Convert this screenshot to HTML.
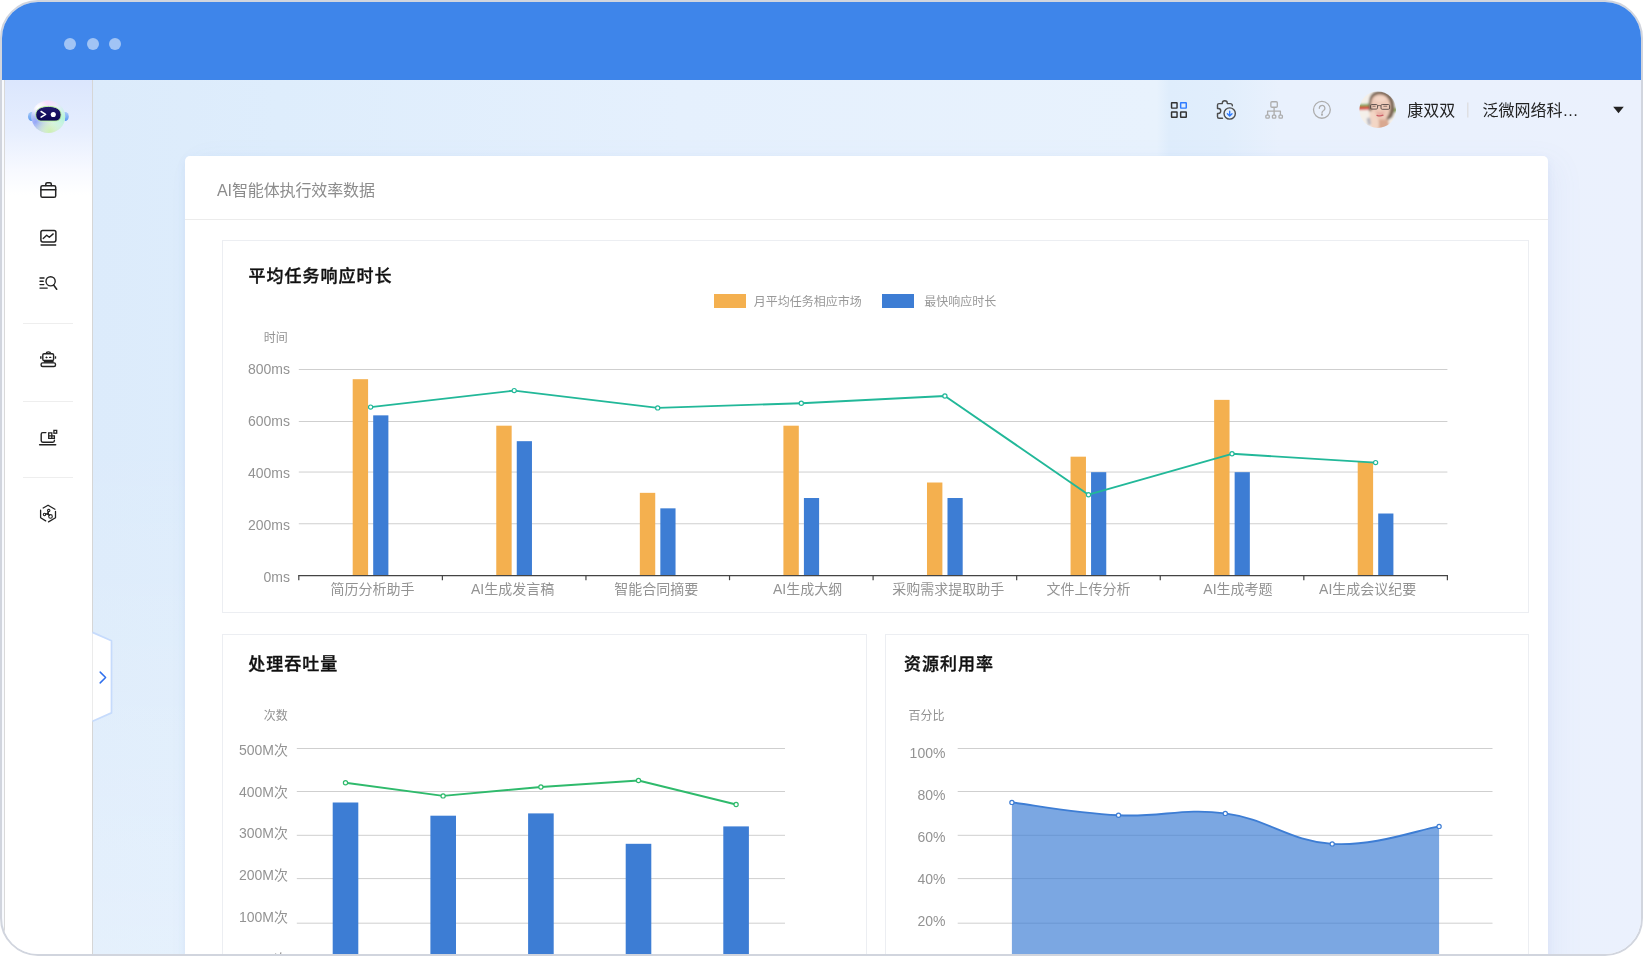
<!DOCTYPE html>
<html lang="zh-CN">
<head>
<meta charset="utf-8">
<title>AI智能体执行效率数据</title>
<style>
html,body{margin:0;padding:0;background:#fff;}
body{width:1644px;height:956px;overflow:hidden;position:relative;font-family:"Liberation Sans", "Noto Sans CJK SC", sans-serif;}
.abs{position:absolute;}
.t{position:absolute;line-height:24px;height:24px;white-space:nowrap;}
#frame{position:absolute;left:0;top:0;width:1639px;height:952px;border:2px solid #d1d5de;border-radius:38px;overflow:hidden;background:#f8fafe;}
#inner{position:absolute;left:-2px;top:-2px;width:1644px;height:956px;}
#topbar{position:absolute;left:0;top:0;width:1644px;height:80px;background:#3e85ea;}
.dot{position:absolute;top:38px;width:12px;height:12px;border-radius:50%;background:#a1c4f5;}
#side{position:absolute;left:4px;top:80px;width:87px;height:876px;border-left:1px solid #d9d9d9;border-right:1px solid #d6d6d6;box-sizing:content-box;
  background:linear-gradient(180deg,#dbe6fd 0px,#e6eefe 50px,#f7f9ff 90px,#ffffff 115px);}
.sdiv{position:absolute;left:23px;width:50px;height:1px;background:#eeeeee;}
#main{position:absolute;left:92px;top:80px;width:1552px;height:876px;
  background:linear-gradient(90deg,#dcebfb 0%,#deedfc 12%,#e5f0fd 38%,#e8f2fd 68.6%,#dfedfc 69.4%,#e1eefc 73%,#e9f1fd 76.5%,#ebf1fd 100%);}
#card{position:absolute;left:184.5px;top:155.5px;width:1363.5px;height:820px;background:#fff;border-radius:5px;box-shadow:10px 6px 30px rgba(100,125,210,0.06),0 3px 9px rgba(90,130,200,0.08);}
#cardline{position:absolute;left:184.5px;top:219px;width:1363.5px;height:1px;background:#ececec;}
#txt{position:absolute;left:0;top:0;width:1644px;height:956px;will-change:transform;}
.panel{position:absolute;border:1px solid #eceef2;box-sizing:border-box;background:#fff;}
</style>
</head>
<body>
<div id="frame"><div id="inner">
<div id="topbar"></div>
<div class="dot" style="left:64px"></div><div class="dot" style="left:86.5px"></div><div class="dot" style="left:109px"></div>
<div id="main"></div>
<div class="abs" style="left:92px;top:80px;width:140px;height:876px;background:linear-gradient(180deg,rgba(255,255,255,0) 0%,rgba(255,255,255,0) 40%,rgba(255,255,255,0.25) 100%)"></div>
<div id="side"></div>
<div class="sdiv" style="top:323px"></div><div class="sdiv" style="top:401px"></div><div class="sdiv" style="top:477px"></div>
<div id="card"></div>
<div id="cardline"></div>
<div class="panel" style="left:222px;top:239.5px;width:1307px;height:373px"></div>
<div class="panel" style="left:222px;top:634px;width:645px;height:340px"></div>
<div class="panel" style="left:884.5px;top:634px;width:644.5px;height:340px"></div>
<svg class="abs" style="left:0;top:0" width="1644" height="956" viewBox="0 0 1644 956"><line x1="298.8" y1="523.75" x2="1447.4" y2="523.75" stroke="#cfcfcf" stroke-width="1"/><line x1="298.8" y1="472.05" x2="1447.4" y2="472.05" stroke="#cfcfcf" stroke-width="1"/><line x1="298.8" y1="421.50" x2="1447.4" y2="421.50" stroke="#cfcfcf" stroke-width="1"/><line x1="298.8" y1="369.50" x2="1447.4" y2="369.50" stroke="#cfcfcf" stroke-width="1"/><rect x="352.69" y="379.19" width="15.4" height="196.31" fill="#f4b04f"/><rect x="373.19" y="415.35" width="15.2" height="160.15" fill="#3d7dd4"/><rect x="496.26" y="425.69" width="15.4" height="149.81" fill="#f4b04f"/><rect x="516.76" y="441.18" width="15.2" height="134.32" fill="#3d7dd4"/><rect x="639.84" y="492.84" width="15.4" height="82.66" fill="#f4b04f"/><rect x="660.34" y="508.34" width="15.2" height="67.16" fill="#3d7dd4"/><rect x="783.41" y="425.69" width="15.4" height="149.81" fill="#f4b04f"/><rect x="803.91" y="498.01" width="15.2" height="77.49" fill="#3d7dd4"/><rect x="926.99" y="482.51" width="15.4" height="92.99" fill="#f4b04f"/><rect x="947.49" y="498.01" width="15.2" height="77.49" fill="#3d7dd4"/><rect x="1070.56" y="456.68" width="15.4" height="118.82" fill="#f4b04f"/><rect x="1091.06" y="472.18" width="15.2" height="103.32" fill="#3d7dd4"/><rect x="1214.14" y="399.86" width="15.4" height="175.64" fill="#f4b04f"/><rect x="1234.64" y="472.18" width="15.2" height="103.32" fill="#3d7dd4"/><rect x="1357.71" y="461.85" width="15.4" height="113.65" fill="#f4b04f"/><rect x="1378.21" y="513.51" width="15.2" height="61.99" fill="#3d7dd4"/><polyline fill="none" stroke="#22b899" stroke-width="1.9" stroke-linejoin="round" points="370.6,407.1 514.2,390.6 657.7,407.9 801.3,403.2 944.9,396.0 1088.5,494.7 1232.0,453.8 1375.6,462.6"/><circle cx="370.6" cy="407.1" r="2.1" fill="#fff" stroke="#22b899" stroke-width="1.2"/><circle cx="514.2" cy="390.6" r="2.1" fill="#fff" stroke="#22b899" stroke-width="1.2"/><circle cx="657.7" cy="407.9" r="2.1" fill="#fff" stroke="#22b899" stroke-width="1.2"/><circle cx="801.3" cy="403.2" r="2.1" fill="#fff" stroke="#22b899" stroke-width="1.2"/><circle cx="944.9" cy="396.0" r="2.1" fill="#fff" stroke="#22b899" stroke-width="1.2"/><circle cx="1088.5" cy="494.7" r="2.1" fill="#fff" stroke="#22b899" stroke-width="1.2"/><circle cx="1232.0" cy="453.8" r="2.1" fill="#fff" stroke="#22b899" stroke-width="1.2"/><circle cx="1375.6" cy="462.6" r="2.1" fill="#fff" stroke="#22b899" stroke-width="1.2"/><line x1="298.2" y1="575.6" x2="1448.0" y2="575.6" stroke="#444" stroke-width="1.3"/><line x1="298.80" y1="575.6" x2="298.80" y2="580.2" stroke="#444" stroke-width="1.2"/><line x1="442.38" y1="575.6" x2="442.38" y2="580.2" stroke="#444" stroke-width="1.2"/><line x1="585.95" y1="575.6" x2="585.95" y2="580.2" stroke="#444" stroke-width="1.2"/><line x1="729.53" y1="575.6" x2="729.53" y2="580.2" stroke="#444" stroke-width="1.2"/><line x1="873.10" y1="575.6" x2="873.10" y2="580.2" stroke="#444" stroke-width="1.2"/><line x1="1016.68" y1="575.6" x2="1016.68" y2="580.2" stroke="#444" stroke-width="1.2"/><line x1="1160.25" y1="575.6" x2="1160.25" y2="580.2" stroke="#444" stroke-width="1.2"/><line x1="1303.83" y1="575.6" x2="1303.83" y2="580.2" stroke="#444" stroke-width="1.2"/><line x1="1447.40" y1="575.6" x2="1447.40" y2="580.2" stroke="#444" stroke-width="1.2"/><line x1="296.8" y1="748.5" x2="785" y2="748.5" stroke="#cfcfcf" stroke-width="1"/><line x1="296.8" y1="791.5" x2="785" y2="791.5" stroke="#cfcfcf" stroke-width="1"/><line x1="296.8" y1="835.3" x2="785" y2="835.3" stroke="#cfcfcf" stroke-width="1"/><line x1="296.8" y1="878.6" x2="785" y2="878.6" stroke="#cfcfcf" stroke-width="1"/><line x1="296.8" y1="923.2" x2="785" y2="923.2" stroke="#cfcfcf" stroke-width="1"/><rect x="332.7" y="802.5" width="25.6" height="157.5" fill="#3d7dd4"/><rect x="430.4" y="815.7" width="25.6" height="144.3" fill="#3d7dd4"/><rect x="528.1" y="813.4" width="25.6" height="146.6" fill="#3d7dd4"/><rect x="625.7" y="843.8" width="25.6" height="116.2" fill="#3d7dd4"/><rect x="723.3" y="826.4" width="25.6" height="133.6" fill="#3d7dd4"/><polyline fill="none" stroke="#2fba6c" stroke-width="1.9" stroke-linejoin="round" points="345.5,782.7 443.1,795.9 540.9,787.0 638.5,780.5 736.1,804.5"/><circle cx="345.5" cy="782.7" r="2.1" fill="#fff" stroke="#2fba6c" stroke-width="1.2"/><circle cx="443.1" cy="795.9" r="2.1" fill="#fff" stroke="#2fba6c" stroke-width="1.2"/><circle cx="540.9" cy="787.0" r="2.1" fill="#fff" stroke="#2fba6c" stroke-width="1.2"/><circle cx="638.5" cy="780.5" r="2.1" fill="#fff" stroke="#2fba6c" stroke-width="1.2"/><circle cx="736.1" cy="804.5" r="2.1" fill="#fff" stroke="#2fba6c" stroke-width="1.2"/><line x1="957.7" y1="748.5" x2="1492.5" y2="748.5" stroke="#cfcfcf" stroke-width="1"/><line x1="957.7" y1="791.5" x2="1492.5" y2="791.5" stroke="#cfcfcf" stroke-width="1"/><line x1="957.7" y1="835.3" x2="1492.5" y2="835.3" stroke="#cfcfcf" stroke-width="1"/><line x1="957.7" y1="878.6" x2="1492.5" y2="878.6" stroke="#cfcfcf" stroke-width="1"/><line x1="957.7" y1="923.2" x2="1492.5" y2="923.2" stroke="#cfcfcf" stroke-width="1"/><path d="M1011.9,802.4 C1033.2,805.0 1075.8,813.1 1118.5,815.3 C1161.2,817.5 1182.6,807.7 1225.3,813.4 C1268.0,819.1 1289.4,841.3 1332.2,843.9 C1375.0,846.5 1417.7,829.9 1439.1,826.4 L1439.1,960 L1011.9,960 Z" fill="#3d7dd4" fill-opacity="0.68"/><path d="M1011.9,802.4 C1033.2,805.0 1075.8,813.1 1118.5,815.3 C1161.2,817.5 1182.6,807.7 1225.3,813.4 C1268.0,819.1 1289.4,841.3 1332.2,843.9 C1375.0,846.5 1417.7,829.9 1439.1,826.4" fill="none" stroke="#3d7dd4" stroke-width="1.9"/><circle cx="1011.9" cy="802.4" r="2.1" fill="#fff" stroke="#3d7dd4" stroke-width="1.2"/><circle cx="1118.5" cy="815.3" r="2.1" fill="#fff" stroke="#3d7dd4" stroke-width="1.2"/><circle cx="1225.3" cy="813.4" r="2.1" fill="#fff" stroke="#3d7dd4" stroke-width="1.2"/><circle cx="1332.2" cy="843.9" r="2.1" fill="#fff" stroke="#3d7dd4" stroke-width="1.2"/><circle cx="1439.1" cy="826.4" r="2.1" fill="#fff" stroke="#3d7dd4" stroke-width="1.2"/></svg>
<svg class="abs" style="left:0;top:0" width="1644" height="956" viewBox="0 0 1644 956" fill="none">
<defs>
  <radialGradient id="rb0" cx="0.5" cy="0.5" r="0.5"><stop offset="0" stop-color="#f4f5ff"/><stop offset="0.8" stop-color="#eef0ff"/><stop offset="1" stop-color="#e3e8fc"/></radialGradient>
  <radialGradient id="rb1" cx="0.47" cy="0.08" r="0.42"><stop offset="0" stop-color="#f6defb"/><stop offset="1" stop-color="#f6defb" stop-opacity="0"/></radialGradient>
  <radialGradient id="rb2" cx="0.13" cy="0.66" r="0.5"><stop offset="0" stop-color="#93a6f7"/><stop offset="1" stop-color="#9fb0f8" stop-opacity="0"/></radialGradient>
  <radialGradient id="rb3" cx="0.55" cy="0.95" r="0.52"><stop offset="0" stop-color="#cdf0b4"/><stop offset="1" stop-color="#d2f2bf" stop-opacity="0"/></radialGradient>
  <radialGradient id="rb4" cx="0.95" cy="0.55" r="0.48"><stop offset="0" stop-color="#b4f5d6"/><stop offset="1" stop-color="#bff7dc" stop-opacity="0"/></radialGradient>
  <radialGradient id="rb5" cx="0.2" cy="0.22" r="0.3"><stop offset="0" stop-color="#ffffff"/><stop offset="1" stop-color="#ffffff" stop-opacity="0"/></radialGradient>
  <linearGradient id="ear" x1="0" y1="0" x2="0" y2="1"><stop offset="0" stop-color="#a9cbfa"/><stop offset="1" stop-color="#5b9bef"/></linearGradient>
  <linearGradient id="visor" x1="0" y1="0" x2="0" y2="1"><stop offset="0" stop-color="#231a6e"/><stop offset="1" stop-color="#0b0552"/></linearGradient>
  <clipPath id="avc"><circle cx="1377.7" cy="109.7" r="18.3"/></clipPath>
  <filter id="bl2" x="-10%" y="-10%" width="120%" height="120%"><feGaussianBlur stdDeviation="0.85"/></filter>
  </defs>

<!-- robot logo -->
<g>
  <ellipse cx="31.6" cy="116.5" rx="3.6" ry="4.6" fill="url(#ear)"/>
  <ellipse cx="65.2" cy="116.5" rx="3.6" ry="4.6" fill="url(#ear)"/>
  <ellipse cx="48.3" cy="116.8" rx="16.9" ry="16.2" fill="url(#rb0)"/>
  <ellipse cx="48.3" cy="116.8" rx="16.9" ry="16.2" fill="url(#rb2)"/>
  <ellipse cx="48.3" cy="116.8" rx="16.9" ry="16.2" fill="url(#rb3)"/>
  <ellipse cx="48.3" cy="116.8" rx="16.9" ry="16.2" fill="url(#rb4)"/>
  <ellipse cx="48.3" cy="116.8" rx="16.9" ry="16.2" fill="url(#rb1)"/>
  <ellipse cx="48.3" cy="116.8" rx="16.9" ry="16.2" fill="url(#rb5)"/>
</g>
<path d="M48.4,106.4 C54.8,106.4 61.1,108.5 61.1,114.7 C61.1,118.7 58.6,121.1 55,121.1 H41.8 C38.2,121.1 35.7,118.7 35.7,114.7 C35.7,108.5 42,106.4 48.4,106.4 Z" fill="url(#visor)" stroke="#bdf5a6" stroke-width="1"/>
<path d="M41.1,111.5 L45.6,114.3 L41.1,117.1" stroke="#fff" stroke-width="1.5" stroke-linecap="round" stroke-linejoin="round"/>
<circle cx="53.3" cy="114.5" r="2.55" fill="#fff"/>

<!-- sidebar icons -->
<g stroke="#222" stroke-width="1.5" stroke-linecap="round" stroke-linejoin="round">
  <!-- briefcase -->
  <rect x="40.9" y="185.7" width="14.8" height="11.6" rx="1.6"/>
  <path d="M40.9,189.7 H55.7"/>
  <path d="M45.8,185.5 V184.1 Q45.8,182.7 47.2,182.7 H49.9 Q51.3,182.7 51.3,184.1 V185.5"/>
  <!-- chart monitor -->
  <rect x="40.9" y="230.4" width="15" height="11.5" rx="1.8"/>
  <path d="M40.6,245 H56.2" stroke-linecap="butt" stroke-width="1.7"/>
  <path d="M43.2,238.4 L46.7,235.2 L49.3,237.3 L53.2,233.9" stroke-width="1.4"/>
  <!-- list search -->
  <path d="M40,278 H44" stroke-width="1.4"/>
  <path d="M40,281.3 H43.2" stroke-width="1.4"/>
  <path d="M40,284.6 H43.8" stroke-width="1.4"/>
  <path d="M40,288.1 H47.2" stroke-width="1.4"/>
  <circle cx="50.6" cy="281.3" r="4.6" stroke-width="1.4"/>
  <path d="M53.6,285 L56.7,289.3" stroke-width="1.5"/>
  <!-- robot -->
  <rect x="42.8" y="353.8" width="10.8" height="6.7" rx="1.3" stroke-width="1.4"/>
  <path d="M46.4,353.4 Q46.4,351.9 48.4,351.9 Q50.4,351.9 50.6,353.4" stroke-width="1.4"/>
  <path d="M40.8,356.3 V358.7" stroke-width="1.5" stroke-linecap="butt"/>
  <path d="M55.5,356.3 V358.7" stroke-width="1.3" stroke-linecap="butt"/>
  <circle cx="46.4" cy="357.4" r="0.6" fill="#222" stroke-width="0.7"/>
  <path d="M49.6,357.4 H50.8" stroke-width="1.2"/>
  <path d="M43.8,361.8 H53.6" stroke-width="1.7" stroke-linecap="butt"/>
  <rect x="41.1" y="362.9" width="14.4" height="3.6" rx="1.5" stroke-width="1.4"/>
  <!-- laptop with blocks -->
  <path d="M45.9,432.6 H42.8 Q41.2,432.6 41.2,434.2 V440.6 Q41.2,442.2 42.8,442.2 H52.9 Q54.4,442.2 54.4,440.6 V440.2" stroke-width="1.4"/>
  <path d="M39.6,444.7 H55.7" stroke-width="1.4"/>
  <path d="M48.7,432.9 H51.8 V435.8 H54.4 V438.4 H48.7 Z M48.7,435.8 H51.8 V438.4" stroke-width="1.3" stroke-linejoin="miter"/>
  <rect x="53.9" y="430.4" width="2.8" height="2.8" stroke-width="1.3" stroke-linejoin="miter"/>
  <!-- hexagon share -->
  <path d="M43.2,508 L48.05,505.2 L54.9,509.2" stroke-width="1.3"/>
  <path d="M55.5,511.5 V517.8 L48.5,521.9" stroke-width="1.3"/>
  <path d="M40.6,510.2 V517.8 L45.7,520.9" stroke-width="1.3"/>
  <circle cx="48.7" cy="510.6" r="1.2" stroke-width="1.1"/>
  <circle cx="44.5" cy="514.5" r="1.2" stroke-width="1.1"/>
  <circle cx="50.5" cy="516.4" r="1.8" stroke-width="1.1"/>
  <path d="M48.4,511.8 L47.8,513.6 M45.6,514.1 L47.6,513.7 M47.9,513.9 L49.3,515.2" stroke-width="1.5"/><circle cx="47.8" cy="513.7" r="0.7" fill="#222" stroke-width="0.8"/>
</g>

<!-- collapse handle -->
<path d="M92.5,632.4 L111.5,640.7 V712.9 L92.5,721.2" fill="#fff" stroke="#c6dbfc" stroke-width="1.7" stroke-linejoin="round"/>
<path d="M100.2,672.1 L105.6,677.5 L100.2,682.9" stroke="#2f6fed" stroke-width="1.5" stroke-linecap="round" stroke-linejoin="round"/>

<!-- top grid icon -->
<g stroke-width="1.45" stroke="#333" stroke-linejoin="round">
  <rect x="1171.55" y="102.8" width="5.5" height="5.3" rx="0.3"/>
  <rect x="1180.65" y="102.8" width="5.6" height="5.3" rx="0.3" stroke="#2f7bff"/>
  <rect x="1171.55" y="111.9" width="5.5" height="5.3" rx="0.3"/>
  <rect x="1180.65" y="111.9" width="5.6" height="5.3" rx="0.3"/>
</g>
<!-- puzzle + download -->
<g stroke="#4d4d4d" stroke-width="1.4" stroke-linecap="round" stroke-linejoin="round">
  <path d="M1222.5,118.2 H1219 Q1217.5,118.2 1217.5,116.7 V113.45 H1218.3 A2.45,2.45 0 0 0 1218.3,108.55 H1217.5 V105.1 Q1217.5,103.6 1219,103.6 H1222.3 V103.3 A2.5,2.5 0 0 1 1227.3,103.3 V103.6 H1230.2 Q1232.3,103.6 1232.4,105.7"/>
  <circle cx="1229.7" cy="113.5" r="5.65"/>
  <path d="M1229.7,111.2 V115.8 M1227.4,113.8 L1229.7,116.1 L1232,113.8" stroke="#2f7bff" stroke-width="1.35"/>
</g>
<!-- org icon -->
<g stroke="#adadad" stroke-width="1.3" stroke-linejoin="round">
  <rect x="1270.85" y="101.75" width="6.45" height="5.5" rx="1.1"/>
  <path d="M1274.1,107.3 V115 M1267.6,115 V111.1 H1280.4 V115"/>
  <rect x="1265.85" y="115.1" width="3.4" height="3.1" rx="0.9"/>
  <rect x="1272.4" y="115.1" width="3.4" height="3.1" rx="0.9"/>
  <rect x="1279" y="115.1" width="3.4" height="3.1" rx="0.9"/>
</g>
<!-- help icon -->
<g stroke="#adadad" stroke-width="1.3" stroke-linecap="round" stroke-linejoin="round">
  <circle cx="1321.9" cy="109.85" r="8.4"/>
  <path d="M1319.3,108.3 A2.8,2.8 0 1 1 1323.7,110.5 Q1322,111.4 1322,112.9"/>
  <circle cx="1322" cy="114.7" r="0.45" fill="#adadad"/>
</g>
<!-- avatar -->
<g clip-path="url(#avc)">
 <g filter="url(#bl2)">
  <rect x="1355" y="87" width="46" height="46" fill="#f4f0ea"/>
  <path d="M1355,104.4 L1371,103.8 V106.4 L1355,107 Z" fill="#7aa852"/>
  <path d="M1355,106.8 L1371,106.2 V109.4 L1355,110 Z" fill="#d8453e"/>
  <path d="M1392.6,108.4 L1399,107 V112 L1393,112.6 Z" fill="#93b168"/>
  <path d="M1368.8,109 Q1367.6,96 1373.6,92.4 Q1380,89.4 1386.6,92.2 Q1394.6,96.2 1394.6,107 Q1394.4,114 1392,117.4 L1388,120 L1369.4,112 Z" fill="#7d6756"/>
  <path d="M1371,104 Q1371.2,95 1379.4,94.2 Q1388.6,94.8 1390.2,103.8 Q1391,112.6 1386.4,118.4 Q1382,122.6 1377.4,119.8 Q1371,114 1371,104 Z" fill="#eecbb9"/>
  <path d="M1375,97.5 Q1380,94.4 1386,97.5 Q1386.6,101.5 1380.4,102 Q1374.6,101.6 1375,97.5 Z" fill="#f4d6c6"/>
  <path d="M1378.6,119.4 H1388.2 L1389.6,131 H1378 Z" fill="#d9a890"/>
  <path d="M1369.2,111.8 Q1372.6,109 1374.8,113 Q1377.8,118.6 1378.8,122.5 L1378.8,131 H1370.4 Q1371.6,124 1369.8,118.6 Z" fill="#f3d6c5"/>
  <path d="M1366.6,118.6 L1370,117.4 L1371,124.2 L1368.2,125.8 Z" fill="#b5b5be"/>
  <path d="M1376.2,111 Q1380,113.6 1384.4,111 Q1383.6,116.4 1379.8,116.4 Q1376.6,116.4 1376.2,111 Z" fill="#e7b0a4"/>
 </g>
 <g opacity="0.85">
  <path d="M1377,115.3 Q1379.8,116.5 1383,115.2" stroke="#c64c59" stroke-width="1.3" fill="none" stroke-linecap="round"/>
  <rect x="1370.5" y="104.5" width="7" height="4.6" rx="1.2" stroke="#4f4542" stroke-width="1"/><rect x="1381" y="104.5" width="8.6" height="4.8" rx="1.2" stroke="#4f4542" stroke-width="1"/><path d="M1377.5,105.8 Q1379.2,105.2 1381,105.8" stroke="#4f4542" stroke-width="0.9"/>
  <path d="M1372.6,106.2 H1375.6 M1383.4,106.2 H1387.2" stroke="#5e4a42" stroke-width="1.1" stroke-opacity="0.8"/>
 </g>
</g>
<!-- user divider + caret -->
<path d="M1467.8,102.4 V117.6" stroke="#dcdcdc" stroke-width="1.2"/>
<path d="M1613.2,106.8 H1623.8 L1618.5,113.2 Z" fill="#222"/>
</svg>

<div id="txt">
<div class="t" style="left:217.0px;top:179.0px;font-size:16px;color:#8c8c8c;font-weight:normal;letter-spacing:-0.12px;">AI智能体执行效率数据</div>
<div class="t" style="left:248.5px;top:264.6px;font-size:17px;color:#111;font-weight:500;letter-spacing:1px;-webkit-text-stroke:0.35px #111;">平均任务响应时长</div>
<div class="t" style="left:248.3px;top:652.6px;font-size:17px;color:#111;font-weight:500;letter-spacing:1px;-webkit-text-stroke:0.35px #111;">处理吞吐量</div>
<div class="t" style="left:904.1px;top:652.6px;font-size:17px;color:#111;font-weight:500;letter-spacing:1px;-webkit-text-stroke:0.35px #111;">资源利用率</div>
<div class="abs" style="left:714.3px;top:294px;width:32px;height:14px;background:#f4b04f"></div>
<div class="t" style="left:753.8px;top:290.0px;font-size:12px;color:#999;font-weight:normal;">月平均任务相应市场</div>
<div class="abs" style="left:882px;top:294px;width:32px;height:14px;background:#3d7dd4"></div>
<div class="t" style="left:924.2px;top:290.0px;font-size:12px;color:#999;font-weight:normal;">最快响应时长</div>
<div class="t" style="right:1356.2px;text-align:right;top:326.1px;font-size:12px;color:#939393;font-weight:normal;">时间</div>
<div class="t" style="right:1354.1px;text-align:right;top:565.3px;font-size:14px;color:#939393;font-weight:normal;">0ms</div>
<div class="t" style="right:1354.1px;text-align:right;top:513.2px;font-size:14px;color:#939393;font-weight:normal;">200ms</div>
<div class="t" style="right:1354.1px;text-align:right;top:461.2px;font-size:14px;color:#939393;font-weight:normal;">400ms</div>
<div class="t" style="right:1354.1px;text-align:right;top:409.1px;font-size:14px;color:#939393;font-weight:normal;">600ms</div>
<div class="t" style="right:1354.1px;text-align:right;top:357.1px;font-size:14px;color:#939393;font-weight:normal;">800ms</div>
<div class="t" style="left:330.6px;top:576.8px;font-size:14px;color:#939393;font-weight:normal;">简历分析助手</div>
<div class="t" style="left:471.0px;top:576.8px;font-size:14px;color:#939393;font-weight:normal;">AI生成发言稿</div>
<div class="t" style="left:614.2px;top:576.8px;font-size:14px;color:#939393;font-weight:normal;">智能合同摘要</div>
<div class="t" style="left:773.0px;top:576.8px;font-size:14px;color:#939393;font-weight:normal;">AI生成大纲</div>
<div class="t" style="left:892.3px;top:576.8px;font-size:14px;color:#939393;font-weight:normal;">采购需求提取助手</div>
<div class="t" style="left:1046.5px;top:576.8px;font-size:14px;color:#939393;font-weight:normal;">文件上传分析</div>
<div class="t" style="left:1203.3px;top:576.8px;font-size:14px;color:#939393;font-weight:normal;">AI生成考题</div>
<div class="t" style="left:1319.1px;top:576.8px;font-size:14px;color:#939393;font-weight:normal;">AI生成会议纪要</div>
<div class="t" style="right:1356.2px;text-align:right;top:704.0px;font-size:12px;color:#939393;font-weight:normal;">次数</div>
<div class="t" style="right:1356.0px;text-align:right;top:737.5px;font-size:14px;color:#939393;font-weight:normal;">500M次</div>
<div class="t" style="right:1356.0px;text-align:right;top:779.6px;font-size:14px;color:#939393;font-weight:normal;">400M次</div>
<div class="t" style="right:1356.0px;text-align:right;top:821.2px;font-size:14px;color:#939393;font-weight:normal;">300M次</div>
<div class="t" style="right:1356.0px;text-align:right;top:863.3px;font-size:14px;color:#939393;font-weight:normal;">200M次</div>
<div class="t" style="right:1356.0px;text-align:right;top:905.1px;font-size:14px;color:#939393;font-weight:normal;">100M次</div>
<div class="t" style="right:1356.0px;text-align:right;top:947.0px;font-size:14px;color:#939393;font-weight:normal;">0M次</div>
<div class="t" style="left:908.5px;top:704.0px;font-size:12px;color:#939393;font-weight:normal;">百分比</div>
<div class="t" style="right:698.6px;text-align:right;top:741.2px;font-size:14px;color:#939393;font-weight:normal;">100%</div>
<div class="t" style="right:698.6px;text-align:right;top:783.0px;font-size:14px;color:#939393;font-weight:normal;">80%</div>
<div class="t" style="right:698.6px;text-align:right;top:824.8px;font-size:14px;color:#939393;font-weight:normal;">60%</div>
<div class="t" style="right:698.6px;text-align:right;top:867.2px;font-size:14px;color:#939393;font-weight:normal;">40%</div>
<div class="t" style="right:698.6px;text-align:right;top:909.1px;font-size:14px;color:#939393;font-weight:normal;">20%</div>
<div class="t" style="left:1407.2px;top:98.7px;font-size:16px;color:#222;font-weight:normal;">康双双</div>
<div class="t" style="left:1482.6px;top:98.7px;font-size:16px;color:#222;font-weight:normal;">泛微网络科…</div>
</div>
</div></div>
</body>
</html>
